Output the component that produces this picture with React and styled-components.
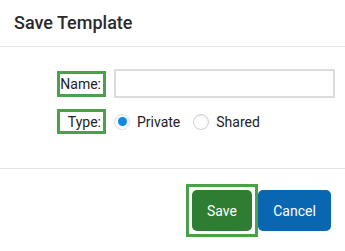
import React from "react";
import styled, { createGlobalStyle } from "styled-components";

const GlobalStyle = createGlobalStyle`
  * {
    margin: 0;
    padding: 0;
    box-sizing: border-box;
  }
  body {
    background: #ffffff;
    font-family: Roboto, "Liberation Sans", Arial, sans-serif;
    color: #222;
  }
`;

const Dialog = styled.section`
  width: 345px;
  height: 251px;
  display: flex;
  flex-direction: column;
  background: #fff;
`;

const Header = styled.header`
  height: 47px;
  padding: 0 14px;
  display: flex;
  align-items: center;
  border-bottom: 1px solid #e3e3e3;
`;

const Title = styled.h2`
  font-size: 18px;
  font-weight: 500;
  color: #2b2b2b;
  margin-top: -2px;
`;

const Body = styled.div`
  height: 122px;
  padding: 22px 10px 0 57px;
  display: grid;
  grid-template-columns: 49px 1fr;
  grid-auto-rows: 29px;
  column-gap: 8px;
  row-gap: 9px;
  align-items: center;
  border-bottom: 1px solid #e3e3e3;
`;

const Label = styled.label`
  height: ${(p) => p.$h}px;
  border: 3px solid #4ba04a;
  display: flex;
  align-items: center;
  justify-content: flex-end;
  padding-right: 2px;
  font-size: 14px;
  color: #222;
`;

const TextInput = styled.input`
  width: 221px;
  height: 29px;
  border: 2px solid #dcdcdc;
  outline: none;
  font-family: inherit;
  font-size: 14px;
  padding: 0 6px;
`;

const RadioGroup = styled.div`
  display: flex;
  align-items: center;
  gap: 13px;
`;

const RadioOption = styled.span`
  display: flex;
  align-items: center;
  gap: 7px;
  font-size: 14px;
  color: #222;
`;

const RadioCircle = styled.span`
  width: 16px;
  height: 16px;
  border-radius: 50%;
  border: 1px solid ${(p) => (p.$checked ? "#d9e2ea" : "#c9cfd4")};
  background: #fff;
  display: flex;
  align-items: center;
  justify-content: center;
  box-shadow: inset 0 1px 2px rgba(0, 0, 0, 0.08);

  &::after {
    content: "";
    width: 9px;
    height: 9px;
    border-radius: 50%;
    background: ${(p) => (p.$checked ? "#0a8ae4" : "transparent")};
  }
`;

const Footer = styled.footer`
  flex: 1;
  display: flex;
  justify-content: flex-end;
  align-items: flex-start;
  padding: 15px 14px 0 0;
`;

const Highlight = styled.div`
  border: 3px solid #4ba04a;
  padding: 3px;
`;

const Button = styled.button`
  height: 41px;
  width: ${(p) => p.$w}px;
  border: none;
  border-radius: 5px;
  background: ${(p) => p.$bg};
  color: #fff;
  font-family: inherit;
  font-size: 14px;
  cursor: pointer;
  margin-top: ${(p) => p.$mt || 0}px;
`;

export default function App() {
  return (
    <Dialog>
      <GlobalStyle />
      <Header>
        <Title>Save Template</Title>
      </Header>
      <Body>
        <Label $h={26} htmlFor="name">Name:</Label>
        <TextInput id="name" type="text" />
        <Label $h={25}>Type:</Label>
        <RadioGroup>
          <RadioOption>
            <RadioCircle $checked />
            Private
          </RadioOption>
          <RadioOption>
            <RadioCircle />
            Shared
          </RadioOption>
        </RadioGroup>
      </Body>
      <Footer>
        <Highlight>
          <Button $w={60} $bg="#2f7d32">Save</Button>
        </Highlight>
        <Button $w={73} $bg="#0966b0" $mt={6}>Cancel</Button>
      </Footer>
    </Dialog>
  );
}
